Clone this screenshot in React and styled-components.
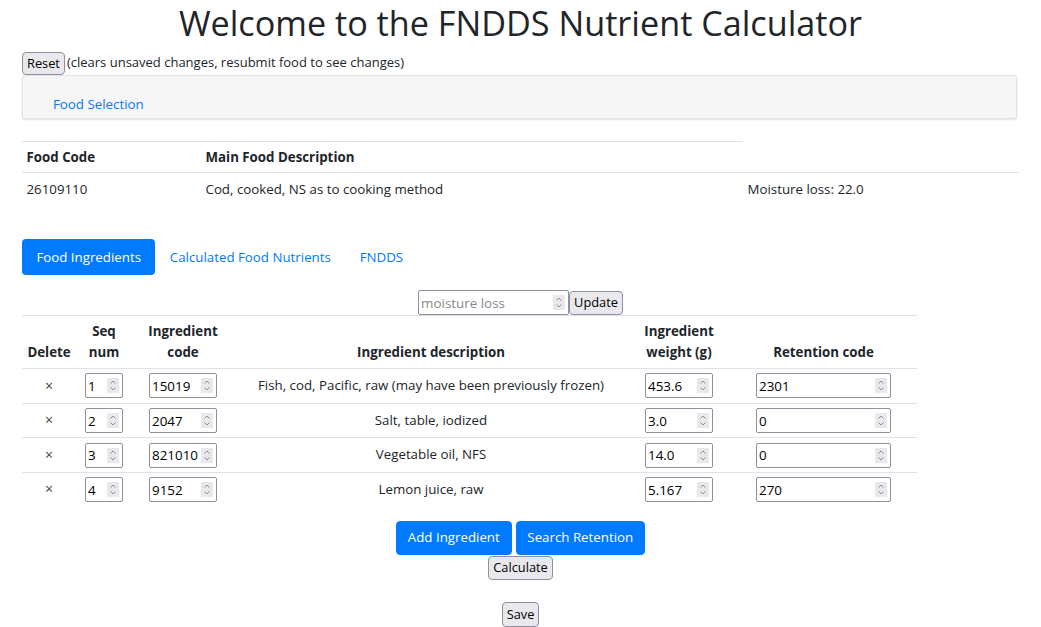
import React from 'react';
import styled, { createGlobalStyle } from 'styled-components';

const Global = createGlobalStyle`
  html, body { margin: 0; padding: 0; background: #fff; }
  body {
    font-family: "Open Sans", "Noto Sans", sans-serif;
    font-size: 13.3px;
    line-height: 1.5;
    color: #212529;
  }
  *, *::before, *::after { box-sizing: border-box; }
`;

const Page = styled.div`
  padding: 0 22px 0 22px;
`;

const Title = styled.h1`
  margin: 0 0 5px;
  font-size: 34.2px;
  font-weight: 400;
  line-height: 46px;
  text-align: center;
  color: #212529;
`;

const ResetRow = styled.div`
  display: flex;
  align-items: center;
  height: 24px;
`;

const NativeButton = styled.button`
  font-family: "Open Sans", "Noto Sans", sans-serif;
  font-size: 12.8px;
  line-height: 19px;
  color: #000;
  background: #e9e9ed;
  border: 1px solid #8f8f9d;
  border-radius: 4px;
  padding: 1px 4px;
  height: ${p => p.$h || 23}px;
  cursor: pointer;
`;

const Note = styled.span`
  margin-left: 2px;
  font-size: 13px;
`;

const Navbar = styled.nav`
  height: 44px;
  margin-right: 2px;
  background: #f6f6f6;
  border: 1px solid #e2e2e2;
  border-radius: 3px;
  box-shadow: 0 1px 2px rgba(0, 0, 0, 0.12);
  padding: 18px 0 0 30px;
`;

const NavLink = styled.a`
  color: #007bff;
  text-decoration: none;
  line-height: 21.6px;
`;

const InfoTable = styled.table`
  margin-top: 22px;
  width: 100%;
  border-collapse: collapse;
  th, td {
    padding: 5px 4.5px 3.6px;
    text-align: left;
    line-height: 21.6px;
    vertical-align: top;
  }
  th {
    font-weight: 700;
    border-top: 1px solid #dee2e6;
    border-bottom: 1px solid #dee2e6;
  }
  td {
    border-top: 1px solid #dee2e6;
    padding-top: 6px;
    padding-bottom: 2.6px;
  }
`;

const Pills = styled.ul`
  display: flex;
  list-style: none;
  margin: 36px 0 0;
  padding: 0;
`;

const Pill = styled.li`
  height: 36px;
  padding: 7.2px 14.4px;
  line-height: 21.6px;
  border-radius: 4px;
  color: ${p => (p.$active ? '#fff' : '#007bff')};
  background: ${p => (p.$active ? '#007bff' : 'transparent')};
  cursor: pointer;
`;

const CenterRow = styled.div`
  display: flex;
  justify-content: center;
  align-items: center;
  gap: ${p => p.$gap || 0}px;
  margin-top: ${p => p.$mt || 0}px;
`;

const FieldBox = styled.div`
  display: flex;
  align-items: center;
  width: ${p => p.$w}px;
  height: 25px;
  border: 1px solid #8f8f9d;
  border-radius: 2px;
  background: #fff;
  padding: 0 3px 0 2px;
`;

const FieldInput = styled.input`
  flex: 1;
  min-width: 0;
  border: none;
  outline: none;
  padding: 0;
  background: transparent;
  font-family: "Open Sans", "Noto Sans", sans-serif;
  font-size: 13.4px;
  color: #000;
  &::placeholder { color: #8a8a8a; }
  &::-webkit-inner-spin-button, &::-webkit-outer-spin-button {
    -webkit-appearance: none;
    margin: 0;
  }
  -moz-appearance: textfield;
`;

const SpinBox = styled.svg`
  flex: none;
  display: block;
  background: #e9e9ed;
`;

const Spinner = () => (
  <SpinBox width="12" height="15" viewBox="0 0 12 15">
    <path d="M3.5 5.5 L6 3 L8.5 5.5" fill="none" stroke="#8d8d8d" strokeWidth="1" />
    <path d="M3.5 9.5 L6 12 L8.5 9.5" fill="none" stroke="#8d8d8d" strokeWidth="1" />
  </SpinBox>
);

const NumberField = ({ w, value, placeholder }) => (
  <FieldBox $w={w}>
    <FieldInput type="number" defaultValue={value} placeholder={placeholder} />
    <Spinner />
  </FieldBox>
);

const IngredientTable = styled.table`
  width: 895px;
  border-collapse: collapse;
  th, td {
    padding: 4.3px 4px;
    text-align: center;
    line-height: 21.6px;
    border-top: 1px solid #dee2e6;
  }
  th {
    font-weight: 700;
    vertical-align: bottom;
    border-bottom: 1px solid #dee2e6;
  }
  td { vertical-align: middle; }
`;

const CellCenter = styled.div`
  display: flex;
  justify-content: center;
`;

const DeleteMark = styled.span`
  color: #444;
  font-size: 14px;
  cursor: pointer;
`;

const PrimaryButton = styled.button`
  font-family: "Open Sans", "Noto Sans", sans-serif;
  font-size: 13.3px;
  line-height: 21.6px;
  color: #fff;
  background: #007bff;
  border: 1px solid #007bff;
  border-radius: 4px;
  padding: 5.4px 10.8px;
  height: 34px;
  cursor: pointer;
`;

const rows = [
  { seq: 1, code: '15019', desc: 'Fish, cod, Pacific, raw (may have been previously frozen)', weight: '453.6', ret: '2301' },
  { seq: 2, code: '2047', desc: 'Salt, table, iodized', weight: '3.0', ret: '0' },
  { seq: 3, code: '821010', desc: 'Vegetable oil, NFS', weight: '14.0', ret: '0' },
  { seq: 4, code: '9152', desc: 'Lemon juice, raw', weight: '5.167', ret: '270' },
];

export default function App() {
  return (
    <Page>
      <Global />
      <Title>Welcome to the FNDDS Nutrient Calculator</Title>
      <ResetRow>
        <NativeButton>Reset</NativeButton>
        <Note>(clears unsaved changes, resubmit food to see changes)</Note>
      </ResetRow>
      <Navbar>
        <NavLink href="#">Food Selection</NavLink>
      </Navbar>

      <InfoTable>
        <colgroup>
          <col style={{ width: 179 }} />
          <col style={{ width: 542 }} />
          <col />
        </colgroup>
        <thead>
          <tr>
            <th>Food Code</th>
            <th>Main Food Description</th>
          </tr>
        </thead>
        <tbody>
          <tr>
            <td>26109110</td>
            <td>Cod, cooked, NS as to cooking method</td>
            <td>Moisture loss: 22.0</td>
          </tr>
        </tbody>
      </InfoTable>

      <Pills>
        <Pill $active>Food Ingredients</Pill>
        <Pill>Calculated Food Nutrients</Pill>
        <Pill>FNDDS</Pill>
      </Pills>

      <CenterRow $mt={15}>
        <NumberField w={151} placeholder="moisture loss" />
        <NativeButton $h={24}>Update</NativeButton>
      </CenterRow>

      <IngredientTable>
        <colgroup>
          <col style={{ width: 54 }} />
          <col style={{ width: 56 }} />
          <col style={{ width: 102 }} />
          <col style={{ width: 394 }} />
          <col style={{ width: 102 }} />
          <col style={{ width: 187 }} />
        </colgroup>
        <thead>
          <tr>
            <th>Delete</th>
            <th>Seq<br />num</th>
            <th>Ingredient<br />code</th>
            <th>Ingredient description</th>
            <th>Ingredient<br />weight (g)</th>
            <th>Retention code</th>
          </tr>
        </thead>
        <tbody>
          {rows.map(r => (
            <tr key={r.seq}>
              <td><DeleteMark>×</DeleteMark></td>
              <td><CellCenter><NumberField w={38} value={r.seq} /></CellCenter></td>
              <td><CellCenter><NumberField w={68} value={r.code} /></CellCenter></td>
              <td>{r.desc}</td>
              <td><CellCenter><NumberField w={68} value={r.weight} /></CellCenter></td>
              <td><CellCenter><NumberField w={135} value={r.ret} /></CellCenter></td>
            </tr>
          ))}
        </tbody>
      </IngredientTable>

      <CenterRow $mt={14} $gap={4}>
        <PrimaryButton>Add Ingredient</PrimaryButton>
        <PrimaryButton>Search Retention</PrimaryButton>
      </CenterRow>
      <CenterRow $mt={1}>
        <NativeButton $h={24}>Calculate</NativeButton>
      </CenterRow>
      <CenterRow $mt={22}>
        <NativeButton $h={25}>Save</NativeButton>
      </CenterRow>
    </Page>
  );
}
